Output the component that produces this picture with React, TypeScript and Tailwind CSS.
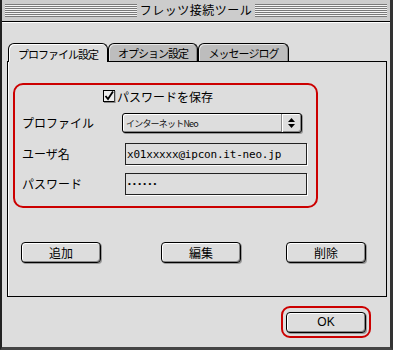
const jp = "font-['Noto_Sans_CJK_JP',sans-serif]";

function Stripes() {
  return (
    <div className="h-[13px] flex-1 bg-[repeating-linear-gradient(to_bottom,#7a7a7a_0px,#7a7a7a_1px,#f4f4f4_1px,#f4f4f4_2px)]" />
  );
}

function MacButton({ label, wide = 80 }: { label: string; wide?: number }) {
  return (
    <div
      style={{ width: wide }}
      className={`flex h-[21px] items-center justify-center rounded-[4px] border border-black bg-[#dddddd] text-[12px] leading-none text-black shadow-[inset_1px_1px_0_#ffffff,inset_-1px_-1px_0_#888888,1px_1px_0_#999999] ${jp}`}
    >
      {label}
    </div>
  );
}

function Tab({ label, width, active }: { label: string; width: number; active?: boolean }) {
  return (
    <div
      style={{ width }}
      className={
        active
          ? `relative z-10 -mb-px flex h-[19px] items-center justify-center rounded-t-[6px] border border-b-0 border-black bg-[#dddddd] pt-[2px] text-[11px] leading-none tracking-[-1px] text-black shadow-[inset_1px_1px_0_#ffffff] ${jp}`
          : `flex h-[18px] items-center justify-center rounded-t-[6px] border border-b-0 border-black bg-[#bdbdbd] pt-[2px] text-[11px] leading-none tracking-[-1px] text-black shadow-[inset_1px_1px_0_#e6e6e6,inset_-1px_0_0_#8c8c8c] ${jp}`
      }
    >
      {label}
    </div>
  );
}

function CheckBox() {
  return (
    <svg width="13" height="13" viewBox="0 0 13 13" className="block">
      <rect x="0.5" y="0.5" width="11" height="11" fill="#eeeeee" stroke="#000" />
      <line x1="12" y1="1" x2="12" y2="12.5" stroke="#888" />
      <line x1="1" y1="12.5" x2="12.5" y2="12.5" stroke="#888" />
      <path d="M2.5 6 L5 9 L10 1.5" fill="none" stroke="#000" strokeWidth="1.8" />
    </svg>
  );
}

export default function App() {
  return (
    <div className="flex h-[350px] w-[393px] flex-col overflow-hidden border-b-[3px] border-l-[2px] border-r-[3px] border-b-[#444444] border-l-[#222222] border-r-[#333333] bg-[#dddddd]">
      {/* title bar */}
      <div className="flex h-[22px] shrink-0 items-center gap-[2px] border-b border-black bg-[#cccccc] px-[3px] pb-[1px]">
        <Stripes />
        <span className={`px-[1px] text-[12px] leading-none tracking-[0.5px] text-black ${jp}`}>フレッツ接続ツール</span>
        <Stripes />
      </div>

      <div className="flex flex-1 flex-col border-t border-t-white pl-[5px] pt-[20px]">
        {/* tabs */}
        <div className="flex h-[18px] items-end pl-[1px]">
          <Tab label="プロファイル設定" width={100} active />
          <Tab label="オプション設定" width={90} />
          <Tab label="メッセージログ" width={91} />
        </div>

        {/* panel */}
        <div className="flex h-[236px] w-[380px] flex-col border border-black shadow-[inset_1px_0_0_#ffffff]">
          <div className="ml-[5px] mt-[21px] flex h-[125px] w-[305px] flex-col rounded-[10px] border-2 border-[#cc0000]">
            <div className="flex items-center gap-[1px] pl-[88px] pt-[5px]">
              <CheckBox />
              <span className={`text-[12px] leading-none text-black ${jp}`}>パスワードを保存</span>
            </div>

            <div className="mt-[10px] flex items-center pl-[7px]">
              <span className={`w-[100px] text-[12px] leading-none text-black ${jp}`}>プロファイル</span>
              <div className="flex h-[20px] w-[180px] items-stretch rounded-[3px] border border-black bg-[#dddddd] shadow-[inset_1px_1px_0_#ffffff,inset_-1px_-1px_0_#888888,1px_1px_0_#999999]">
                <span className={`flex flex-1 items-center pl-[3px] text-[9px] leading-none tracking-[-0.8px] text-[#111] ${jp}`}>
                  インターネットNeo
                </span>
                <div className="flex w-[20px] flex-col items-center justify-center gap-[2px] border-l border-l-[#888888] shadow-[inset_1px_0_0_#ffffff]">
                  <svg width="7" height="4" viewBox="0 0 7 4">
                    <path d="M3.5 0 L7 4 L0 4 Z" fill="#000" />
                  </svg>
                  <svg width="7" height="4" viewBox="0 0 7 4">
                    <path d="M0 0 L7 0 L3.5 4 Z" fill="#000" />
                  </svg>
                </div>
              </div>
            </div>

            <div className="mt-[10px] flex items-center pl-[7px]">
              <span className={`w-[103px] text-[12px] leading-none text-black ${jp}`}>ユーザ名</span>
              <div className="flex h-[22px] w-[182px] items-center border border-[#222] bg-[#dddddd] pl-[1px] shadow-[1px_1px_0_#ffffff]">
                <span className="font-['DejaVu_Sans_Mono',monospace] text-[11px] leading-none tracking-[-0.2px] text-black">
                  x01xxxxx@ipcon.it-neo.jp
                </span>
              </div>
            </div>

            <div className="mt-[8px] flex items-center pl-[7px]">
              <span className={`w-[103px] text-[12px] leading-none text-black ${jp}`}>パスワード</span>
              <div className="flex h-[22px] w-[182px] items-center border border-[#222] bg-[#dddddd] pl-[2px] shadow-[1px_1px_0_#ffffff]">
                <span className="font-['Liberation_Sans',sans-serif] text-[8px] leading-none tracking-[2.3px] text-black">
                  ••••••
                </span>
              </div>
            </div>
          </div>

          <div className="mt-[34px] flex pl-[13px]">
            <MacButton label="追加" />
            <div className="ml-[60px]">
              <MacButton label="編集" />
            </div>
            <div className="ml-[45px]">
              <MacButton label="削除" />
            </div>
          </div>
        </div>

        {/* OK */}
        <div className="ml-[274px] mt-[9px] flex h-[32px] w-[90px] items-center justify-center rounded-[9px] border-2 border-[#cc0000]">
          <div className="flex h-[21px] w-[80px] items-center justify-center rounded-[4px] border border-black bg-[#dddddd] font-['Liberation_Sans',sans-serif] text-[12px] font-normal leading-none text-black shadow-[inset_1px_1px_0_#ffffff,inset_-1px_-1px_0_#888888,1px_1px_0_#999999]">
            OK
          </div>
        </div>
      </div>
    </div>
  );
}
